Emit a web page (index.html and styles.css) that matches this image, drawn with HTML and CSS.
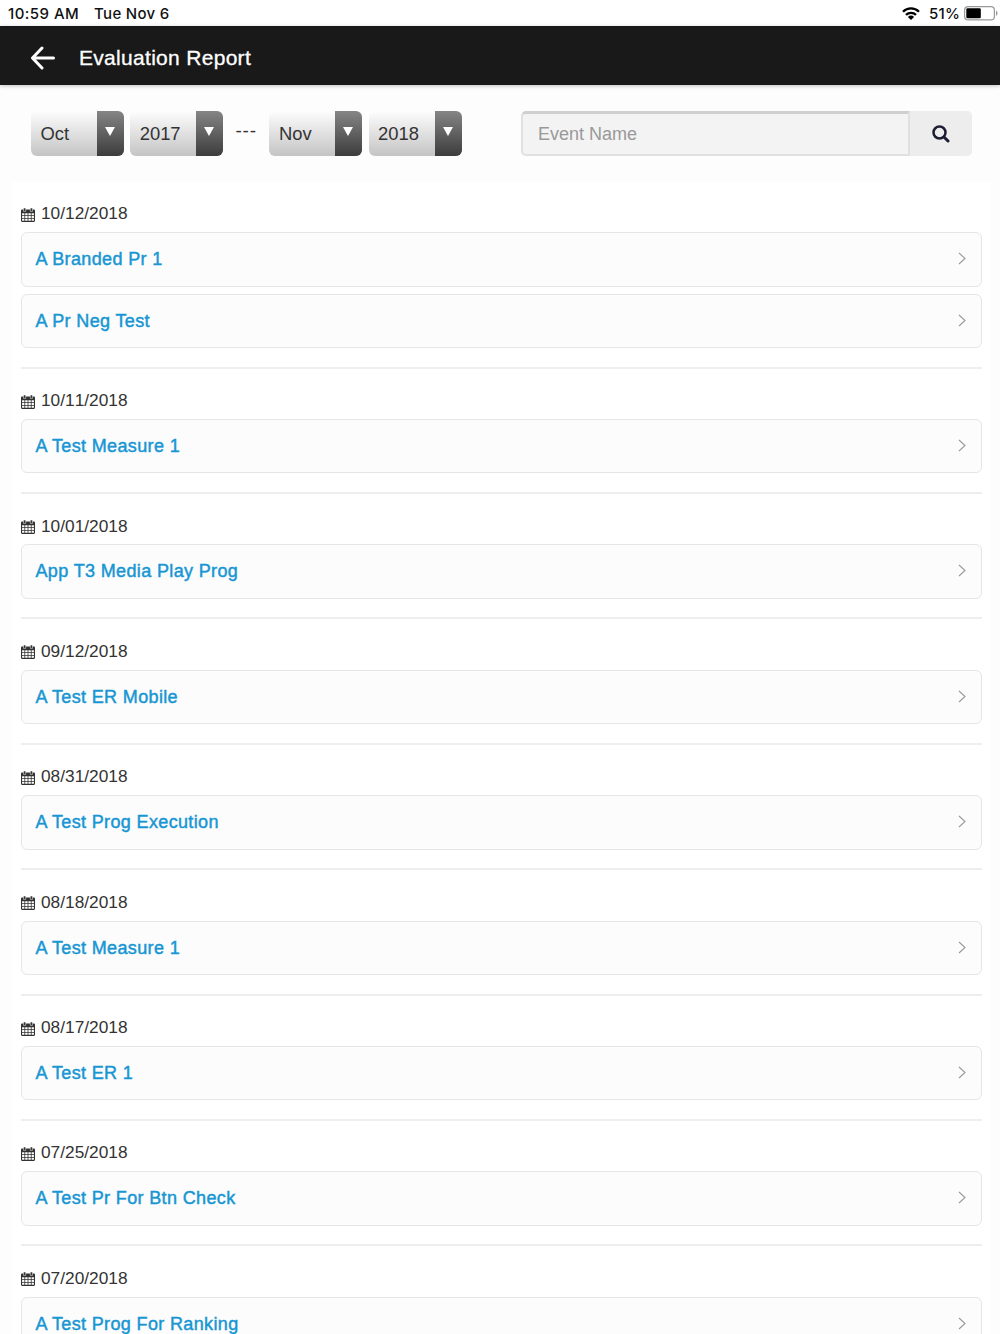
FILE: index.html
```html
<!DOCTYPE html>
<html lang="en">
<head>
    <meta charset="UTF-8">
    <meta name="viewport" content="width=device-width, initial-scale=1.0">
    <title>Evaluation Report</title>
    <link rel="stylesheet" href="styles.css">
</head>
<body>
    <!-- Shared icons -->
    <svg class="icon-defs" aria-hidden="true">
        <symbol id="icon-calendar" viewBox="0 0 14 14">
            <path fill="#333" d="M1.200 1.600h11.600c.7 0 1.200.5 1.200 1.200v10c0 .7-.5 1.200-1.200 1.200H1.200C.5 14 0 13.500 0 12.800v-10c0-.7.5-1.200 1.200-1.200z"/>
            <path fill="#333" stroke="#fff" stroke-width=".5" d="M2.500 0h2.200v3.400H2.500zM9.300 0h2.200v3.400H9.300z"/>
            <path fill="#fff" d="M1.100 5.200h2.300v2H1.100zM4.200 5.200h2.400v2H4.200zM7.400 5.200h2.400v2H7.400zM10.600 5.200h2.300v2h-2.300zM1.100 8h2.300v2H1.100zM4.200 8h2.400v2H4.200zM7.400 8h2.400v2H7.400zM10.600 8h2.300v2h-2.300zM1.100 10.800h2.300v2H1.100zM4.200 10.800h2.400v2H4.200zM7.400 10.800h2.400v2H7.400zM10.600 10.800h2.300v2h-2.300z"/>
        </symbol>
        <symbol id="icon-chevron" viewBox="0 0 8 13">
            <path fill="none" stroke="#999" stroke-width="1.1" d="M1 1l6 5.500L1 12"/>
        </symbol>
    </svg>

    <div class="status-bar">
        <span class="status-time">10:59 AM</span>
        <span class="status-date">Tue Nov 6</span>
        <svg class="status-wifi" viewBox="0 0 18 13" aria-hidden="true">
            <path fill="none" stroke="#000" stroke-width="2.300" d="M1 4.700a11.400 11.400 0 0 1 16 0M4 7.900a7.200 7.200 0 0 1 10 0"/>
            <path d="M9 13L5.900 9.900a4.400 4.400 0 0 1 6.200 0z"/>
        </svg>
        <span class="status-percent">51%</span>
        <svg class="status-battery" viewBox="0 0 34 15" aria-hidden="true">
            <rect x=".6" y=".6" width="29.800" height="13.300" rx="3.500" fill="#fff" stroke="#999" stroke-width="1.200"/>
            <rect x="2.300" y="2.300" width="14.500" height="10" rx="1.200"/>
            <path fill="#999" d="M32 4.800c2 .6 2 4.400 0 5z"/>
        </svg>
    </div>

    <header class="app-header">
        <button class="back-button" aria-label="Back">
            <svg viewBox="0 0 26 24" aria-hidden="true">
                <path fill="none" stroke="#fff" stroke-width="3" stroke-linecap="round" stroke-linejoin="round" d="M12 2L2.500 12 12 22M3 12h20.500"/>
            </svg>
        </button>
        <h1>Evaluation Report</h1>
    </header>

    <form class="filters">
        <div class="select">
            <span class="select-value">Oct</span>
            <span class="select-arrow"></span>
        </div>
        <div class="select">
            <span class="select-value">2017</span>
            <span class="select-arrow"></span>
        </div>
        <span class="range-separator">---</span>
        <div class="select">
            <span class="select-value">Nov</span>
            <span class="select-arrow"></span>
        </div>
        <div class="select">
            <span class="select-value">2018</span>
            <span class="select-arrow"></span>
        </div>
        <div class="search">
            <input class="search-input" type="text" placeholder="Event Name">
            <button class="search-button" type="button" aria-label="Search">
                <svg viewBox="0 0 18 18" aria-hidden="true">
                    <circle cx="7.500" cy="7.500" r="6" fill="none" stroke="#1d1d33" stroke-width="2.500"/>
                    <path stroke="#1d1d33" stroke-width="3" stroke-linecap="round" d="M12.500 12.500l3.500 3.500"/>
                </svg>
            </button>
        </div>
    </form>

    <main class="report">
        <section class="day">
            <h2 class="day-date"><svg><use href="#icon-calendar"/></svg>10/12/2018</h2>
            <a class="event" href="#"><span>A Branded Pr 1</span><svg><use href="#icon-chevron"/></svg></a>
            <a class="event" href="#"><span>A Pr Neg Test</span><svg><use href="#icon-chevron"/></svg></a>
        </section>
        <section class="day">
            <h2 class="day-date"><svg><use href="#icon-calendar"/></svg>10/11/2018</h2>
            <a class="event" href="#"><span>A Test Measure 1</span><svg><use href="#icon-chevron"/></svg></a>
        </section>
        <section class="day">
            <h2 class="day-date"><svg><use href="#icon-calendar"/></svg>10/01/2018</h2>
            <a class="event" href="#"><span>App T3 Media Play Prog</span><svg><use href="#icon-chevron"/></svg></a>
        </section>
        <section class="day">
            <h2 class="day-date"><svg><use href="#icon-calendar"/></svg>09/12/2018</h2>
            <a class="event" href="#"><span>A Test ER Mobile</span><svg><use href="#icon-chevron"/></svg></a>
        </section>
        <section class="day">
            <h2 class="day-date"><svg><use href="#icon-calendar"/></svg>08/31/2018</h2>
            <a class="event" href="#"><span>A Test Prog Execution</span><svg><use href="#icon-chevron"/></svg></a>
        </section>
        <section class="day">
            <h2 class="day-date"><svg><use href="#icon-calendar"/></svg>08/18/2018</h2>
            <a class="event" href="#"><span>A Test Measure 1</span><svg><use href="#icon-chevron"/></svg></a>
        </section>
        <section class="day">
            <h2 class="day-date"><svg><use href="#icon-calendar"/></svg>08/17/2018</h2>
            <a class="event" href="#"><span>A Test ER 1</span><svg><use href="#icon-chevron"/></svg></a>
        </section>
        <section class="day">
            <h2 class="day-date"><svg><use href="#icon-calendar"/></svg>07/25/2018</h2>
            <a class="event" href="#"><span>A Test Pr For Btn Check</span><svg><use href="#icon-chevron"/></svg></a>
        </section>
        <section class="day">
            <h2 class="day-date"><svg><use href="#icon-calendar"/></svg>07/20/2018</h2>
            <a class="event" href="#"><span>A Test Prog For Ranking</span><svg><use href="#icon-chevron"/></svg></a>
        </section>
    </main>
</body>
</html>
```

FILE: styles.css
```css
* {
    box-sizing: border-box;
}
body {
    margin: 0;
    height: 1334px;
    overflow: hidden;
    background-color: #fdfdfd;
    color: #333;
    font-family: "Liberation Sans", Arial, sans-serif;
}
.icon-defs {
    display: none;
}

/* Status bar */
.status-bar {
    display: flex;
    align-items: center;
    height: 26px;
    padding: 1px 2px 0 8px;
    background-color: #fff;
    color: #111;
    font-family: Inter, "Liberation Sans", sans-serif;
    font-size: 15px;
    font-weight: 500;
    letter-spacing: 0.45px;
}
.status-date {
    margin-left: 15px;
    letter-spacing: 0.3px;
}
.status-wifi {
    width: 18px;
    height: 13px;
    margin-left: auto;
}
.status-percent {
    margin: 0 4px 0 9px;
    letter-spacing: 0.2px;
}
.status-battery {
    width: 34px;
    height: 15px;
}

/* Header */
.app-header {
    display: flex;
    align-items: center;
    height: 59px;
    padding: 5px 30px 0;
    background-color: #191919;
    box-shadow: 0 1px 4px rgba(0, 0, 0, 0.25);
    color: #fff;
}
.back-button {
    width: 26px;
    height: 24px;
    margin-right: 23px;
    padding: 0;
    border: none;
    background: none;
}
.back-button svg {
    display: block;
    width: 26px;
    height: 24px;
}
.app-header h1 {
    margin: 0;
    font-size: 21px;
    font-weight: normal;
    letter-spacing: 0.3px;
    -webkit-text-stroke: 0.3px #fff;
}

/* Filters */
.filters {
    display: flex;
    height: 96.9px;
    padding: 26px 28px 0 31px;
}
.select {
    display: flex;
    width: 93px;
    height: 45px;
    margin-right: 6.2px;
    border-radius: 6px;
    overflow: hidden;
    background: linear-gradient(#fdfdfd, #c4c4c4);
}
.select-value {
    flex: 1;
    padding-left: 9.5px;
    font-size: 18.4px;
    line-height: 46px;
}
.select-arrow {
    width: 27px;
    padding: 16px 0 0 8px;
    background: linear-gradient(#858585, #3c3c3c);
}
.select-arrow::before {
    content: "";
    display: block;
    width: 0;
    border: 5px solid transparent;
    border-top: 9px solid #fff;
    border-bottom: none;
}
.range-separator {
    width: 34px;
    margin-right: 6px;
    padding-left: 6px;
    font-size: 19px;
    letter-spacing: 0.9px;
    line-height: 39px;
}
.search {
    display: flex;
    width: 451px;
    height: 45px;
    margin-left: auto;
}
.search-input {
    flex: 1;
    min-width: 0;
    padding: 0 0 0 15px;
    border: 2px solid #e0e0e0;
    border-top: 3px solid #cfcfcf;
    border-radius: 5px 0 0 5px;
    background-color: #f3f3f3;
    font-family: inherit;
    font-size: 18px;
}
.search-input::placeholder {
    color: #999;
}
.search-button {
    width: 62px;
    padding: 0 0 0 22px;
    border: none;
    border-radius: 0 5px 5px 0;
    background-color: #ededed;
}
.search-button svg {
    display: block;
    width: 18px;
    height: 18px;
}

/* Report list */
.report {
    margin: 0 9px 0 12px;
    padding: 0 9px;
    background-color: #fff;
}
.day {
    padding-bottom: 11.6px;
    border-bottom: 2px solid #eee;
}
.day-date {
    display: flex;
    align-items: center;
    height: 50.4px;
    margin: 0;
    padding: 21.6px 0 8px;
    font-size: 17.3px;
    font-weight: normal;
    font-kerning: none;
}
.day-date svg {
    width: 14px;
    height: 14px;
    margin: 2px 6px 0 0;
}
.event {
    display: flex;
    align-items: center;
    justify-content: space-between;
    height: 54.4px;
    margin-bottom: 7px;
    padding: 0.6px 15px 0 13.5px;
    border: 1px solid #e6e6e6;
    border-radius: 6px;
    background-color: #fcfcfc;
    color: #1796d3;
    font-size: 18px;
    letter-spacing: 0.36px;
    text-decoration: none;
    -webkit-text-stroke: 0.45px #1796d3;
}
.event svg {
    width: 8px;
    height: 13px;
    margin-bottom: 2px;
    -webkit-text-stroke: 0;
}
```
